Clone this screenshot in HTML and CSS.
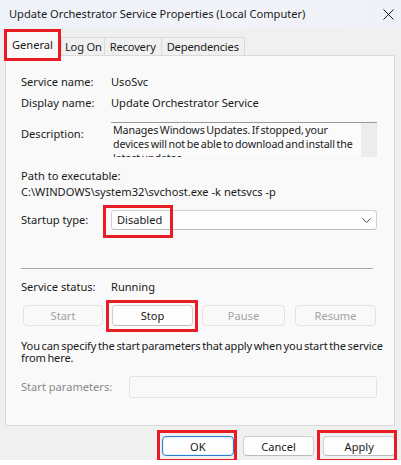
FILE: index.html
```html
<!DOCTYPE html>
<html>
<head>
<meta charset="utf-8">
<link rel="stylesheet" href="styles.css">
</head>
<body>
<div class="window">
  <div class="titlebar">
    <span class="title">Update Orchestrator Service Properties (Local Computer)</span>
    <svg class="close" width="11" height="11" viewBox="0 0 11 11"><path d="M0.5 0.5 L10.5 10.5 M10.5 0.5 L0.5 10.5" stroke="#1a1a1a" stroke-width="1"/></svg>
  </div>
  <div class="body">
    <div class="tabs">
      <div class="tab selected">General</div>
      <div class="tab t-logon">Log On</div>
      <div class="tab t-wide">Recovery</div>
      <div class="tab t-wide">Dependencies</div>
    </div>
    <div class="panel">
      <div class="row r1"><span class="label">Service name:</span><span>UsoSvc</span></div>
      <div class="row r2"><span class="label">Display name:</span><span>Update Orchestrator Service</span></div>
      <div class="row r3">
        <span class="label desc-label">Description:</span>
        <div class="descbox">
          <div class="desctext">Manages Windows Updates. If stopped, your devices will not be able to download and install the latest updates.</div>
          <div class="scroll"></div>
        </div>
      </div>
      <div class="path-label">Path to executable:</div>
      <div class="path">C:\WINDOWS\system32\svchost.exe -k netsvcs -p</div>
      <div class="row r4">
        <span class="label">Startup type:</span>
        <div class="select"><span>Disabled</span>
          <svg width="9" height="5" viewBox="0 0 9 5"><path d="M0.5 0.5 L4.5 4.5 L8.5 0.5" fill="none" stroke="#555" stroke-width="1"/></svg>
        </div>
      </div>
      <div class="sep"></div>
      <div class="row r5"><span class="label">Service status:</span><span>Running</span></div>
      <div class="svc-buttons">
        <div class="btn disabled b-start">Start</div>
        <div class="btn b-stop">Stop</div>
        <div class="btn disabled b-pause">Pause</div>
        <div class="btn disabled b-resume">Resume</div>
      </div>
      <div class="help">You can specify the start parameters that apply when you start the service from here.</div>
      <div class="row r6">
        <span class="label gray wide">Start parameters:</span>
        <div class="input"></div>
      </div>
    </div>
    <div class="dlg-buttons">
      <div class="btn dlg default">OK</div>
      <div class="btn dlg">Cancel</div>
      <div class="btn dlg">Apply</div>
    </div>
  </div>
  <div class="mark m-general"></div>
  <div class="mark m-startup"></div>
  <div class="mark m-stop"></div>
  <div class="mark m-ok"></div>
  <div class="mark m-apply"></div>
</div>
</body>
</html>
```
FILE: styles.css
```css
html, body {
  margin: 0;
  padding: 0;
  background: #ffffff;
}
body {
  font-family: "Noto Sans", "Open Sans", sans-serif;
  font-size: 11.1px;
  color: #1a1a1a;
}
.window {
  position: relative;
  width: 401px;
  height: 460px;
  background: #f0f0f0;
  overflow: hidden;
}
.titlebar {
  height: 28px;
  background: linear-gradient(90deg, #eef2f9 0%, #f1f3f8 60%, #eef1f7 100%);
  display: flex;
  align-items: center;
  padding-left: 9px;
  padding-right: 7px;
  justify-content: space-between;
}
.title {
  color: #1a1a1a;
  line-height: 16px;
}
.body {
  padding: 3px 6px 0 5px;
}
.tabs {
  display: flex;
  align-items: flex-end;
  height: 24px;
  position: relative;
  z-index: 2;
}
.tab {
  height: 17px;
  line-height: 18px;
  border: 1px solid #dadada;
  border-bottom: none;
  background: #f0f0f0;
  padding: 0 3px;
  margin-left: -1px;
  box-sizing: content-box;
  letter-spacing: -0.15px;
}
.tab.t-logon {
  padding: 0 2px 0 3px;
}
.tab.t-wide {
  padding: 0 5px;
}
.tab.selected {
  height: 24px;
  line-height: 26px;
  background: #f9f9f9;
  margin-left: 0;
  padding: 0 7px 0 6px;
  margin-right: 1px;
  margin-bottom: -1px;
  letter-spacing: 0;
}
.panel {
  background: #f9f9f9;
  border: 1px solid #dadada;
  height: 351px;
  padding: 18px 0 0 15px;
  box-sizing: content-box;
}
.row {
  display: flex;
  align-items: flex-start;
  line-height: 16px;
}
.label {
  width: 90px;
  flex: none;
}
.label.wide {
  width: 108px;
}
.gray {
  color: #8a8a8a;
}
.r2 { margin-top: 5px; }
.r3 { margin-top: 11px; }
.desc-label { margin-top: 4px; }
.descbox {
  width: 266px;
  height: 34px;
  border-top: 1px solid #9a9a9a;
  background: #fbfbfb;
  display: flex;
  overflow: hidden;
}
.desctext {
  flex: 1;
  padding-left: 2px;
  font-size: 10.7px;
  line-height: 14px;
  overflow: hidden;
  letter-spacing: -0.12px;
  word-spacing: -1px;
}
.scroll {
  width: 16px;
  background: #ececec;
  flex: none;
}
.path-label {
  margin-top: 11px;
  line-height: 16px;
}
.path {
  line-height: 16px;
}
.r4 {
  margin-top: 10px;
  align-items: center;
}
.select {
  width: 266px;
  height: 20px;
  box-sizing: border-box;
  border: 1px solid #d2d2d2;
  border-bottom-color: #bdbdbd;
  border-radius: 3px;
  background: #fdfdfd;
  display: flex;
  align-items: center;
  justify-content: space-between;
  padding: 0 5px 0 5px;
}
.sep {
  margin-top: 38px;
  width: 352px;
  height: 1px;
  background: #a8a8a8;
}
.r5 { margin-top: 10px; }
.svc-buttons {
  display: flex;
  margin-top: 10px;
  margin-left: 2px;
}
.btn {
  box-sizing: border-box;
  height: 21px;
  border: 1px solid #d0d0d0;
  border-bottom-color: #bcbcbc;
  border-radius: 4px;
  background: #fdfdfd;
  display: flex;
  align-items: center;
  justify-content: center;
  color: #1a1a1a;
}
.btn.disabled {
  background: #f9f9f9;
  border-color: #e3e3e3;
  color: #a3a3a3;
}
.b-start { width: 80px; }
.b-stop { width: 81px; margin-left: 9px; }
.b-pause { width: 83px; margin-left: 9px; }
.b-resume { width: 81px; margin-left: 10px; }
.help {
  margin-top: 14px;
  line-height: 12px;
  width: 368px;
  letter-spacing: -0.15px;
  word-spacing: -1px;
}
.r6 {
  margin-top: 12px;
  align-items: center;
}
.input {
  width: 248px;
  height: 22px;
  box-sizing: border-box;
  border: 1px solid #e3e3e3;
  border-radius: 3px;
  background: #f9f9f9;
}
.dlg-buttons {
  display: flex;
  margin-top: 10px;
  margin-left: 157px;
  gap: 9px;
}
.btn.dlg {
  width: 72px;
  height: 20px;
}
.btn.default {
  border: 1px solid #2b7fd1;
  box-shadow: inset 0 0 0 1px #e8f0fa;
}
.mark {
  position: absolute;
  border: 3px solid #e81c24;
  box-sizing: border-box;
  z-index: 5;
}
.m-general { left: 4px; top: 29px; width: 57px; height: 32px; }
.m-startup { left: 103px; top: 205px; width: 70px; height: 33px; }
.m-stop { left: 106px; top: 300px; width: 92px; height: 32px; }
.m-ok { left: 157px; top: 430px; width: 80px; height: 32px; }
.m-apply { left: 317px; top: 430px; width: 80px; height: 32px; }
```
